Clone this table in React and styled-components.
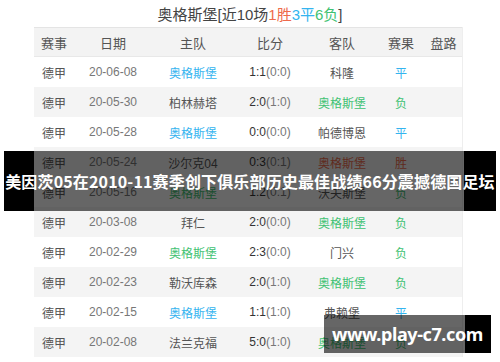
import React from 'react'
import styled, { createGlobalStyle } from "styled-components";

const GlobalStyle = createGlobalStyle`
  html, body { margin: 0; padding: 0; background: #fff; }
  body { font-family: "Liberation Sans", "Noto Sans CJK SC", sans-serif; }
`;

const colors = {
  win: "#ee6a4c",
  draw: "#34b4ef",
  lose: "#3fc273",
};

const Page = styled.div`
  position: relative;
  width: 500px;
  height: 362px;
  overflow: hidden;
`;

const Title = styled.div`
  height: 27px;
  line-height: 29px;
  text-align: center;
  font-size: 15px;
  color: #444;
`;

const Tint = styled.span`
  color: ${(p) => colors[p.$tone]};
`;

const Table = styled.div`
  margin-left: 34px;
  width: 429px;
  border-right: 1px solid #eee;
  box-sizing: border-box;
`;

const Row = styled.div`
  display: grid;
  grid-template-columns: 40px 78px 82px 72px 72px 46px 39px;
  height: 30px;
  align-items: center;
  font-size: 12px;
  color: #666;
  background: ${(p) => (p.$head ? "#f3f3f3" : p.$alt ? "#f4f4f4" : "#fff")};
  border-top: ${(p) => (p.$head ? "1px solid #e4e4e4" : "none")};
  border-bottom: ${(p) => (p.$head ? "1px solid #e8e8e8" : "none")};
  box-sizing: border-box;
`;

const Cell = styled.div`
  text-align: center;
  white-space: nowrap;
  color: ${(p) => (p.$tone ? colors[p.$tone] : p.$dark ? "#555" : "#777")};
  font-size: ${(p) => (p.$head ? "13px" : "12px")};
`;

const ScoreMain = styled.span`
  color: #333;
`;

const Banner = styled.div`
  position: absolute;
  left: 4px;
  top: 151px;
  width: 492px;
  height: 60px;
  background: linear-gradient(
    to right,
    #000 0 30px,
    rgba(0, 0, 0, 0.6) 30px 460px,
    #000 460px
  );
  display: flex;
  align-items: center;
  justify-content: center;
  color: #fff;
  font-weight: bold;
  font-size: 16px;
  letter-spacing: 0.15px;
  white-space: nowrap;
  font-family: "Noto Sans CJK SC", sans-serif;
`;

const Watermark = styled.div`
  position: absolute;
  left: 324px;
  top: 315px;
  width: 167px;
  height: 38px;
  background: linear-gradient(
    to right,
    rgba(0, 0, 0, 0.6) 0 141px,
    #000 141px
  );
  display: flex;
  align-items: center;
  justify-content: center;
  color: #fff;
  font-weight: bold;
  font-size: 18px;
  letter-spacing: -0.4px;
  white-space: nowrap;
  font-family: "Noto Sans", "DejaVu Sans", sans-serif;
`;

const HOME = "奥格斯堡";

const matches = [
  { date: "20-06-08", home: HOME, score: "1:1", half: "(0:0)", away: "科隆", result: "平", tone: "draw" },
  { date: "20-05-30", home: "柏林赫塔", score: "2:0", half: "(1:0)", away: HOME, result: "负", tone: "lose" },
  { date: "20-05-28", home: HOME, score: "0:0", half: "(0:0)", away: "帕德博恩", result: "平", tone: "draw" },
  { date: "20-05-24", home: "沙尔克04", score: "0:3", half: "(0:1)", away: HOME, result: "胜", tone: "win" },
  { date: "20-05-16", home: HOME, score: "1:2", half: "(0:1)", away: "沃夫斯堡", result: "负", tone: "lose" },
  { date: "20-03-08", home: "拜仁", score: "2:0", half: "(0:0)", away: HOME, result: "负", tone: "lose" },
  { date: "20-02-29", home: HOME, score: "2:3", half: "(0:0)", away: "门兴", result: "负", tone: "lose" },
  { date: "20-02-23", home: "勒沃库森", score: "2:0", half: "(1:0)", away: HOME, result: "负", tone: "lose" },
  { date: "20-02-15", home: HOME, score: "1:1", half: "(1:0)", away: "弗赖堡", result: "平", tone: "draw" },
  { date: "20-02-08", home: "法兰克福", score: "5:0", half: "(1:0)", away: HOME, result: "负", tone: "lose" },
];

const headers = ["赛事", "日期", "主队", "比分", "客队", "赛果", "盘路"];

const App = () => {
  return (
    <Page>
      <GlobalStyle />
      <Title>
        奥格斯堡[近10场<Tint $tone="win">1胜</Tint>
        <Tint $tone="draw">3平</Tint>
        <Tint $tone="lose">6负</Tint>]
      </Title>

      <Table>
        <Row $head>
          {headers.map((h) => (
            <Cell key={h} $head $dark>{h}</Cell>
          ))}
        </Row>
        {matches.map((m, i) => (
          <Row key={m.date} $alt={i % 2 === 1}>
            <Cell $dark>德甲</Cell>
            <Cell>{m.date}</Cell>
            <Cell $dark $tone={m.home === HOME ? m.tone : null}>{m.home}</Cell>
            <Cell>
              <ScoreMain>{m.score}</ScoreMain>{m.half}
            </Cell>
            <Cell $dark $tone={m.away === HOME ? m.tone : null}>{m.away}</Cell>
            <Cell $tone={m.tone}>{m.result}</Cell>
            <Cell />
          </Row>
        ))}
      </Table>

      <Banner>美因茨05在2010-11赛季创下俱乐部历史最佳战绩66分震撼德国足坛</Banner>
      <Watermark>www.play-c7.com</Watermark>
    </Page>
  )
}

export default App
